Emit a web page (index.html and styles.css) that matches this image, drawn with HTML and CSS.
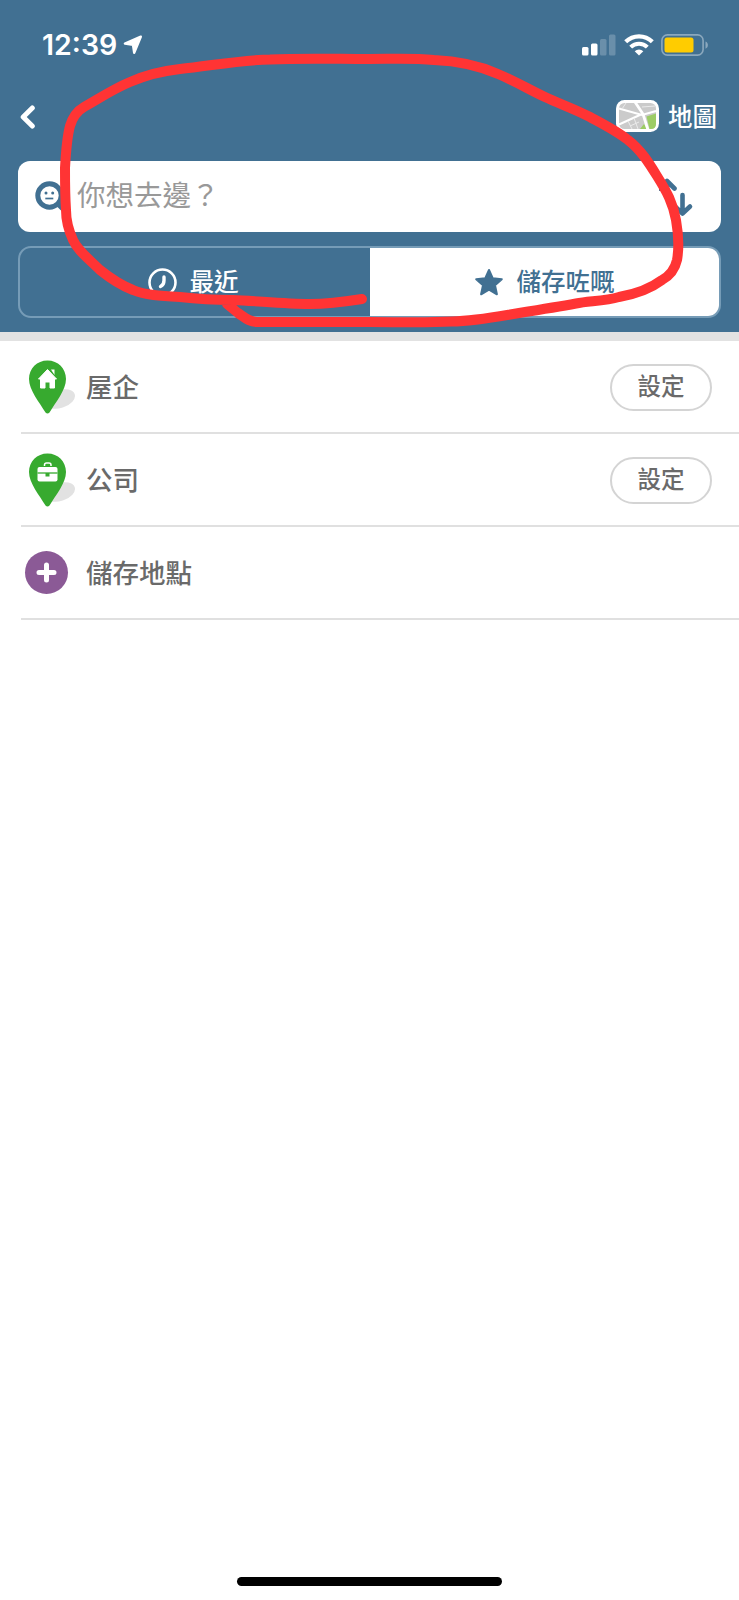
FILE: index.html
```html
<!DOCTYPE html>
<html lang="zh-HK">
<head>
  <meta charset="UTF-8" />
  <meta name="viewport" content="width=device-width, initial-scale=1.0" />
  <title>儲存咗嘅地點</title>
  <link rel="stylesheet" href="styles.css">
</head>
<body>
  <header class="header">
    <div class="status-bar">
      <div class="status-left">
        <span class="time">12:39</span>
        <svg width="20" height="20" viewBox="0 0 20 20">
          <path d="M17.800 1.700 1.900 8.500l8.100 1.300 1.200 7.900z" fill="#fff" stroke="#fff" stroke-width="2.400" stroke-linejoin="round"/>
        </svg>
      </div>
      <div class="status-right">
        <svg width="34" height="22" viewBox="0 0 34 22" fill="#fff">
          <rect x="0" y="13" width="6.5" height="8.5" rx="1.5"/>
          <rect x="9" y="9.5" width="6.5" height="12" rx="1.5"/>
          <rect x="18" y="5" width="6.5" height="16.5" rx="1.5" opacity=".22"/>
          <rect x="27" y="0.5" width="6.5" height="21" rx="1.5" opacity=".22"/>
        </svg>
        <svg width="30" height="22" viewBox="0 0 30 22" fill="none" stroke="#fff">
          <path d="M1.7 7.8a19 19 0 0 1 26.6 0" stroke-width="4.2"/>
          <path d="M6.7 13.2a11.7 11.7 0 0 1 16.6 0" stroke-width="4"/>
          <path d="M10.7 17.3a6.3 6.3 0 0 1 8.6 0L15 21.600z" fill="#fff" stroke="none"/>
        </svg>
        <svg width="48" height="22" viewBox="0 0 48 22">
          <rect x="0.9" y="0.9" width="41.2" height="20.2" rx="5.5" fill="none" stroke="#8ba8bd" stroke-width="1.6"/>
          <rect x="3.5" y="3.5" width="29" height="15" rx="2.5" fill="#ffcc00"/>
          <path d="M44.500 7.500c3.200 1.200 3.200 6 0 7.200z" fill="#8ba8bd"/>
        </svg>
      </div>
    </div>

    <nav class="nav-bar">
      <svg class="back" width="16" height="26" viewBox="0 0 16 26">
        <path d="M12.300 5 3.200 14l9.100 9" fill="none" stroke="#fff" stroke-width="5" stroke-linecap="round" stroke-linejoin="round"/>
      </svg>
      <div class="map-link">
        <svg width="43" height="32" viewBox="0 0 43 32">
          <rect width="43" height="32" rx="8.5" fill="#fff"/>
          <rect x="3" y="3" width="37" height="26" rx="5.5" fill="#cbcbcb"/>
          <path d="M30.500 16.500l9.500-3v10.500q0 5-5 5h-1.500z" fill="#9ccc65"/>
          <path d="M24 29l4-5 3 5z" fill="#9ccc65"/>
          <path d="M3 8.500l23 6.500 14-4M3 24.500l23-10.500" fill="none" stroke="#fff" stroke-width="2"/>
          <path d="M19 2l8 12 5 16" fill="none" stroke="#fff" stroke-width="2.800"/>
          <path d="M10 3l-4 6M12 21l4 8M18 18l4 11M14 26l9-4M26 7l13-1" fill="none" stroke="#ebebeb" stroke-width="1"/>
        </svg>
        <span>地圖</span>
      </div>
    </nav>

    <div class="search">
      <svg width="32" height="32" viewBox="0 0 32 32">
        <path d="M22.500 21.500l6 6" stroke="#417092" stroke-width="5" stroke-linecap="round"/>
        <circle cx="15.500" cy="14.500" r="11.700" fill="#fff" stroke="#417092" stroke-width="5"/>
        <circle cx="12" cy="12" r="1.5" fill="#417092"/>
        <circle cx="18.700" cy="12" r="1.5" fill="#417092"/>
        <path d="M11.300 17.500h8" stroke="#417092" stroke-width="1.7"/>
      </svg>
      <span class="placeholder">你想去邊？</span>
      <svg width="36" height="40" viewBox="0 0 36 40" fill="none" stroke="#417092" stroke-width="4.6" stroke-linecap="round" stroke-linejoin="round">
        <path d="M8 17V4M.5 11.500l7.500-7.500 7.500 7.500"/>
        <path d="M23.500 18v18.500M15.500 29l8 7.500 7.500-7"/>
      </svg>
    </div>

    <div class="tabs">
      <div class="tab recent">
        <svg width="29" height="29" viewBox="0 0 29 29" fill="none" stroke="#fff">
          <circle cx="14.5" cy="14.5" r="13" stroke-width="2.6"/>
          <path d="M16 9v3.500q0 4.500-3.500 6" stroke-width="3.4" stroke-linecap="round"/>
        </svg>
        <span>最近</span>
      </div>
      <div class="tab active">
        <svg width="30" height="28" viewBox="0 0 30 28">
          <path d="M15 2l3.700 8.200 9.100 1-6.800 6.100 1.900 9-7.900-4.600-7.900 4.600 1.900-9-6.800-6.100 9.100-1z" fill="#417092" stroke="#417092" stroke-width="2" stroke-linejoin="round"/>
        </svg>
        <span>儲存咗嘅</span>
      </div>
    </div>
  </header>

  <main class="list">
    <div class="row">
      <svg class="icon" width="54" height="56" viewBox="0 0 54 56">
        <ellipse cx="38" cy="40" rx="15.500" ry="9" transform="rotate(-18 38 40)" fill="#e2e2e2"/>
        <path d="M25.500 1.500C15 1.500 7 9.500 7 20c0 11 10.500 23.500 16.500 33.500q2 2 4 0C33.500 43.500 44 31 44 20 44 9.500 36 1.500 25.500 1.500z" fill="#37aa2f"/>
        <path d="M25.500 10.500l9 9.500h-2v9h-4.500v-6h-5v6h-4.500v-9h-2z" fill="#fff" stroke="#fff" stroke-linejoin="round"/>
        <path d="M29 10.500h3.500v5.500z" fill="#fff"/>
      </svg>
      <span class="name">屋企</span>
      <button class="set">設定</button>
    </div>
    <div class="row">
      <svg class="icon" width="54" height="56" viewBox="0 0 54 56">
        <ellipse cx="38" cy="40" rx="15.500" ry="9" transform="rotate(-18 38 40)" fill="#e2e2e2"/>
        <path d="M25.500 1.500C15 1.500 7 9.500 7 20c0 11 10.500 23.500 16.500 33.500q2 2 4 0C33.500 43.500 44 31 44 20 44 9.500 36 1.500 25.500 1.500z" fill="#37aa2f"/>
        <path d="M22.500 14v-1q0-2 2-2h2.500q2 0 2 2v1" fill="none" stroke="#fff" stroke-width="1.5"/>
        <rect x="15.500" y="15" width="20" height="14.5" rx="2" fill="#fff"/>
        <path d="M15.500 21h20" stroke="#37aa2f" stroke-width="1.3"/>
        <path d="M23.500 21h4v3.500h-4z" fill="#37aa2f"/>
      </svg>
      <span class="name">公司</span>
      <button class="set">設定</button>
    </div>
    <div class="row">
      <svg class="icon" width="54" height="44" viewBox="0 0 54 44">
        <circle cx="24.500" cy="21.500" r="21.500" fill="#8b5a96"/>
        <path d="M24.500 14v15M17 21.500h15" stroke="#fff" stroke-width="5" stroke-linecap="round"/>
      </svg>
      <span class="name">儲存地點</span>
    </div>
  </main>

  <div class="home-indicator"></div>

  <!-- hand-drawn marker over the search area -->
  <svg class="marker" width="739" height="345" viewBox="0 0 739 345">
    <path d="M362 299C343 302 327 304 310 304C284 304 258 301 233 300C214 300 197 299 180 297C160 296 145 295 133 290C120 285 110 278 100 270C88 258 78 251 73 240C68 229 66 220 66 210C65 195 65 182 65 168C66 150 67 137 70 126C73 116 77 111 84 107C100 98 113 89 130 82C146 75 162 71 180 69C210 66 240 60 270 59.500C302 58 335 59 369 59C393 59 413 58 434 60C459 61 480 66 498 74C515 81 530 90 545 97C560 104 575 109 590 117C603 124 617 131 628 140C641 150 649 163 657 176C667 192 673 203 676 220C679 237 679 249 677 260C675 269 671 275 662 280C650 289 636 294 619 297C605 301 590 301 576 303.500C557 307 538 310 519 313C495 317 475 321 452 321.500C425 323 397 322 369 322L257 322C249 322 244 317 238 313L227 304"/>
  </svg>
</body>
</html>
```
FILE: styles.css
```css
* {
  box-sizing: border-box;
}
body {
  margin: 0;
  min-height: 1600px;
  display: flex;
  flex-direction: column;
  position: relative;
  background-color: #fff;
  font-family: "Noto Sans CJK TC", sans-serif;
}
svg {
  display: block;
  flex-shrink: 0;
}
.header {
  height: 341px;
  padding: 0 18px;
  background-color: #417092;
  border-bottom: 9px solid #e2e2e2;
}
.status-bar {
  height: 88px;
  padding: 2px 12px 0 24px;
  display: flex;
  align-items: center;
  justify-content: space-between;
}
.status-left, .status-right {
  display: flex;
  align-items: center;
}
.status-left {
  gap: 6px;
}
.status-right {
  gap: 7.5px;
}
.time {
  font-family: Inter, sans-serif;
  font-size: 28.5px;
  font-weight: 600;
  line-height: 32px;
  color: #fff;
}
.nav-bar {
  height: 56px;
  padding: 0 4px 0 2px;
  display: flex;
  align-items: center;
  justify-content: space-between;
}
.map-link {
  display: flex;
  align-items: center;
  gap: 9px;
  font-size: 24.5px;
  font-weight: 500;
  line-height: 32px;
  color: #fff;
}
.map-link span {
  margin-top: -1px;
}
.search {
  height: 71px;
  margin-top: 17px;
  padding: 0 26px 0 16px;
  display: flex;
  align-items: center;
  background-color: #fff;
  border-radius: 12px;
}
.placeholder {
  flex: 1;
  margin: -5px 0 0 11px;
  font-size: 28.5px;
  line-height: 40px;
  color: #999;
}
.tabs {
  height: 72px;
  margin-top: 14px;
  display: flex;
  border: 2px solid #769cb7;
  border-radius: 13px;
  overflow: hidden;
}
.tab {
  width: 50%;
  display: flex;
  align-items: center;
  justify-content: center;
  gap: 12.5px;
  font-size: 24.5px;
  font-weight: 500;
  line-height: 36px;
  color: #fff;
}
.recent {
  padding-right: 3px;
}
.tab.active {
  background-color: #fff;
  color: #417092;
}
.tab span {
  margin-top: -2px;
}
.row {
  height: 93px;
  margin-left: 21px;
  padding: 1px 27px 0 1px;
  display: flex;
  align-items: center;
  border-bottom: 2px solid #e0e0e0;
}
.name {
  flex: 1;
  margin: -2px 0 0 10px;
  font-size: 26.5px;
  font-weight: 500;
  line-height: 40px;
  color: #6a6a6a;
}
.set {
  width: 102px;
  height: 47px;
  padding: 0 0 4px;
  border: 2px solid #d4d4d4;
  border-radius: 24px;
  background-color: #fff;
  font-family: inherit;
  font-size: 23.5px;
  font-weight: 500;
  line-height: 38px;
  color: #6a6a6a;
}
.home-indicator {
  width: 265px;
  height: 9px;
  margin: auto auto 14px;
  border-radius: 5px;
  background-color: #000;
}
.marker {
  position: absolute;
  top: 0;
  left: 0;
  fill: none;
  stroke: #ff3434;
  stroke-width: 10;
  stroke-linecap: round;
  stroke-linejoin: round;
}
```
